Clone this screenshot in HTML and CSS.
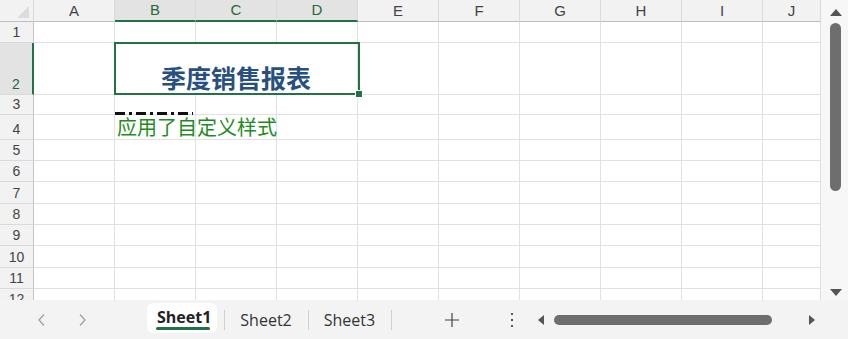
FILE: index.html
```html
<!DOCTYPE html>
<html lang="zh">
<head>
<meta charset="UTF-8">
<meta name="viewport" content="width=device-width, initial-scale=1.0">
<title>季度销售报表</title>
<link rel="stylesheet" href="styles.css">
</head>
<body>
<div class="app">
  <div class="main">
    <div class="sheet">
      <table class="grid">
        <colgroup>
          <col class="hd"><col><col><col><col><col><col><col><col><col><col class="last">
        </colgroup>
        <thead>
          <tr class="h-hd">
            <th class="corner"><span class="tri"></span></th>
            <th>A</th><th class="sel">B</th><th class="sel">C</th><th class="sel">D</th>
            <th>E</th><th>F</th><th>G</th><th>H</th><th>I</th><th>J</th>
          </tr>
        </thead>
        <tbody>
          <tr class="h21"><th>1</th><td></td><td></td><td></td><td></td><td></td><td></td><td></td><td></td><td></td><td></td></tr>
          <tr class="h52"><th class="sel">2</th><td></td><td colspan="3" class="title">季度销售报表</td><td></td><td></td><td></td><td></td><td></td><td></td></tr>
          <tr class="h20"><th>3</th><td></td><td></td><td></td><td></td><td></td><td></td><td></td><td></td><td></td><td></td></tr>
          <tr class="h25"><th>4</th><td></td><td class="note">应用了自定义样式</td><td></td><td></td><td></td><td></td><td></td><td></td><td></td><td></td></tr>
          <tr class="h21"><th>5</th><td></td><td></td><td></td><td></td><td></td><td></td><td></td><td></td><td></td><td></td></tr>
          <tr class="h21"><th>6</th><td></td><td></td><td></td><td></td><td></td><td></td><td></td><td></td><td></td><td></td></tr>
          <tr class="h22"><th>7</th><td></td><td></td><td></td><td></td><td></td><td></td><td></td><td></td><td></td><td></td></tr>
          <tr class="h21"><th>8</th><td></td><td></td><td></td><td></td><td></td><td></td><td></td><td></td><td></td><td></td></tr>
          <tr class="h21"><th>9</th><td></td><td></td><td></td><td></td><td></td><td></td><td></td><td></td><td></td><td></td></tr>
          <tr class="h22"><th>10</th><td></td><td></td><td></td><td></td><td></td><td></td><td></td><td></td><td></td><td></td></tr>
          <tr class="h21"><th>11</th><td></td><td></td><td></td><td></td><td></td><td></td><td></td><td></td><td></td><td></td></tr>
          <tr class="h21"><th>12</th><td></td><td></td><td></td><td></td><td></td><td></td><td></td><td></td><td></td><td></td></tr>
        </tbody>
      </table>
      <div class="selection"><span class="handle"></span></div>
    </div>
    <div class="vscroll">
      <span class="arrow up"></span>
      <span class="vthumb"></span>
      <span class="arrow down"></span>
    </div>
  </div>

  <div class="tabbar">
    <div class="nav">
      <svg width="10" height="14" viewBox="0 0 10 14"><polyline points="7,1.5 2,7 7,12.5" fill="none" stroke="#a0a0a0" stroke-width="1.3"/></svg>
      <svg width="10" height="14" viewBox="0 0 10 14"><polyline points="3,1.5 8,7 3,12.5" fill="none" stroke="#a0a0a0" stroke-width="1.3"/></svg>
    </div>
    <div class="tabs">
      <div class="tab active">Sheet1</div>
      <span class="sep"></span>
      <div class="tab">Sheet2</div>
      <span class="sep"></span>
      <div class="tab">Sheet3</div>
      <span class="sep"></span>
    </div>
    <svg class="add" width="16" height="16" viewBox="0 0 16 16"><path d="M8 1v14M1 8h14" stroke="#444" stroke-width="1.2"/></svg>
    <span class="more"><i></i><i></i><i></i></span>
    <div class="hscroll">
      <span class="arrow left"></span>
      <span class="hthumb"></span>
      <span class="arrow right"></span>
    </div>
  </div>
</div>
</body>
</html>
```

FILE: styles.css
```css
* {
  box-sizing: border-box;
}

body {
  margin: 0;
  font-family: 'Liberation Sans', Arial, sans-serif;
  background: #fff;
}

.app {
  width: 848px;
  height: 339px;
  display: flex;
  flex-direction: column;
  background: #f3f3f3;
  overflow: hidden;
}

.main {
  display: flex;
  height: 300px;
}

.sheet {
  position: relative;
  width: 821px;
  height: 300px;
  overflow: hidden;
  background: #fff;
}

/* grid */
.grid {
  border-collapse: separate;
  border-spacing: 0;
  table-layout: fixed;
  width: 821px;
}

.grid col { width: 81px; }
.grid col.hd { width: 34px; }
.grid col.last { width: 58px; }

.grid th,
.grid td {
  padding: 0;
  border-right: 1px solid #e1e1e1;
  border-bottom: 1px solid #e1e1e1;
}

.grid th {
  background: #f2f2f2;
  font-weight: normal;
  font-size: 14px;
  color: #444;
}

.grid thead th {
  border-right-color: #dadada;
  border-bottom-color: #bfbfbf;
  vertical-align: middle;
  font-size: 15px;
  line-height: 16px;
}

.grid tbody th {
  border-right-color: #c4c4c4;
  border-bottom-color: #dadada;
  vertical-align: bottom;
  line-height: 18px;
  padding-bottom: 1px;
}

.grid thead th.sel {
  background: #e3e3e3;
  color: #1e6b3b;
  border-bottom: 2px solid #217346;
}

.grid tbody th.sel {
  background: #e3e3e3;
  color: #1e6b3b;
  border-right: 2px solid #217346;
}

.corner {
  position: relative;
}

.corner .tri {
  position: absolute;
  right: 4px;
  bottom: 3px;
  width: 0;
  height: 0;
  border-left: 12px solid transparent;
  border-bottom: 12px solid #dcdcdc;
}

.h-hd { height: 22px; }
.h20 { height: 20px; }
.h21 { height: 21px; }
.h22 { height: 22px; }
.h25 { height: 25px; }
.h52 { height: 52px; }

.title {
  text-align: center;
  vertical-align: bottom;
  padding-bottom: 2px !important;
  font-family: 'Noto Sans CJK SC', 'Liberation Sans', sans-serif;
  font-weight: bold;
  font-size: 25px;
  line-height: 30px;
  color: #27507f;
}

.note {
  position: relative;
  vertical-align: bottom;
  white-space: nowrap;
  padding-left: 2px !important;
  font-family: 'Noto Sans CJK SC', 'Liberation Sans', sans-serif;
  font-size: 20px;
  line-height: 24px;
  color: #1e8c22;
}

/* dash-dot top border */
.note::before {
  content: '';
  position: absolute;
  left: 0;
  top: -3px;
  width: 78px;
  height: 3px;
  background: repeating-linear-gradient(to right,
    #111 0 10px, transparent 10px 14px,
    #111 14px 17px, transparent 17px 21px);
}

.selection {
  position: absolute;
  left: 114px;
  top: 42px;
  width: 246px;
  height: 53px;
  border: 2px solid #217346;
  pointer-events: none;
}

.selection .handle {
  position: absolute;
  right: -4px;
  bottom: -4px;
  width: 6px;
  height: 6px;
  background: #217346;
  outline: 1px solid #fff;
}

/* vertical scrollbar */
.vscroll {
  width: 27px;
  background: #f7f7f7;
  display: flex;
  flex-direction: column;
  align-items: center;
  padding: 9px 0 4px 2px;
}

.arrow {
  width: 0;
  height: 0;
  display: block;
}

.arrow.up {
  border-left: 6px solid transparent;
  border-right: 6px solid transparent;
  border-bottom: 7px solid #555;
}

.arrow.down {
  margin-top: auto;
  border-left: 6px solid transparent;
  border-right: 6px solid transparent;
  border-top: 7px solid #555;
}

.vthumb {
  margin-top: 7px;
  width: 11px;
  height: 168px;
  border-radius: 6px;
  background: #6e6e6e;
}

/* sheet tabs */
.tabbar {
  flex: 1;
  display: flex;
  align-items: center;
  font-family: 'Open Sans', 'Liberation Sans', sans-serif;
  font-size: 16px;
  color: #333;
}

.nav {
  display: flex;
  gap: 30px;
  margin-left: 37px;
  width: 110px;
}

.tabs {
  display: flex;
  align-items: center;
  height: 100%;
}

.tab {
  padding: 0 16px 0 15px;
  line-height: 20px;
}

.tab.active {
  align-self: flex-start;
  margin-top: 3px;
  height: 30px;
  padding: 4px 6px 0 10px;
  background: #fff;
  border-radius: 6px;
  font-weight: bold;
  color: #222;
  position: relative;
}

.tab.active::after {
  content: '';
  position: absolute;
  left: 9px;
  right: 7px;
  bottom: 3px;
  height: 3px;
  border-radius: 2px;
  background: #217346;
}

.sep {
  width: 1px;
  height: 20px;
  background: #cfcfcf;
}

.tab.active + .sep {
  margin-left: 7px;
}

.add {
  margin-left: 52px;
}

.more {
  margin-left: 51px;
  display: flex;
  flex-direction: column;
  gap: 4px;
}

.more i {
  display: block;
  width: 2px;
  height: 2px;
  background: #555;
}

.hscroll {
  display: flex;
  align-items: center;
  margin-left: 25px;
}

.arrow.left {
  border-top: 5px solid transparent;
  border-bottom: 5px solid transparent;
  border-right: 6px solid #555;
}

.arrow.right {
  margin-left: 37px;
  border-top: 5px solid transparent;
  border-bottom: 5px solid transparent;
  border-left: 6px solid #555;
}

.hthumb {
  margin-left: 10px;
  width: 218px;
  height: 10px;
  border-radius: 5px;
  background: #6e6e6e;
}
```
